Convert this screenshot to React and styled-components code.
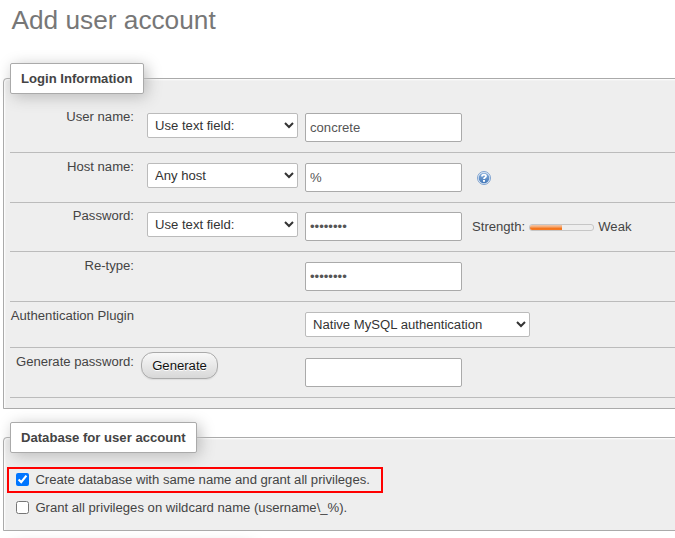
import React from 'react';
import styled, { createGlobalStyle } from 'styled-components';

const GlobalStyle = createGlobalStyle`
  html, body { margin: 0; padding: 0; background: #fff; }
  *, *::before, *::after { box-sizing: border-box; }
  body, input, select, button { font-family: "Liberation Sans", Arial, sans-serif; font-size: 13.12px; }
  body { color: #444; }
`;

const Page = styled.main`
  height: 538px;
  overflow: hidden;
`;

const Title = styled.h2`
  margin: 0;
  height: 63px;
  padding: 5px 0 0 11.5px;
  color: #777;
  font-size: 26.24px;
  font-weight: normal;
  line-height: 30px;
  white-space: nowrap;
`;

const Panel = styled.fieldset`
  margin: 0 -12px 13px 3px;
  padding: 0 10px 0 6px;
  border: 1px solid #aaa;
  border-radius: 4px 0 0 0;
  background: #eee;
  box-shadow: 1px 1px 2px #fff inset;
  min-width: 0;
`;

const Legend = styled.legend`
  width: ${(p) => p.$width}px;
  height: 31px;
  padding: 0 0 0 10px;
  border: 1px solid #aaa;
  border-radius: 2px;
  background: #fff;
  box-shadow: 3px 3px 15px #bbb;
  color: #444;
  font-weight: bold;
  line-height: 29px;
  white-space: nowrap;
`;

const Rows = styled.div`
  padding: 9px 0 10px;
`;

const Row = styled.div`
  display: flex;
  align-items: flex-start;
  height: ${(p) => p.$height || 50}px;
  padding-top: ${(p) => p.$top || 10}px;
  border-bottom: 1px solid #bbb;
`;

const Label = styled.label`
  width: 124px;
  margin-top: -4px;
  line-height: 15px;
  text-align: right;
  white-space: nowrap;
`;

const Choice = styled.div`
  display: flex;
  width: 171px;
  padding-left: 13px;
`;

const Select = styled.select`
  width: ${(p) => p.$width || 151}px;
  height: 25px;
  margin: 0;
  padding: 0 3px;
  border: 1px solid #bbb;
  border-radius: 2px;
  background: #fff;
  color: #333;
`;

const Input = styled.input`
  width: 157px;
  height: 29px;
  margin: 0;
  padding: 0 4px;
  border: 1px solid #aaa;
  border-radius: 2px;
  background: #fff;
  color: #555;
`;

const GenerateButton = styled.button`
  width: 77px;
  height: 27px;
  margin: -6px 0 0 -6px;
  padding: 0;
  border: 1px solid #aaa;
  border-radius: 12px;
  background: linear-gradient(#f8f8f8, #d8d8d8);
  box-shadow: 0 1px 1px #ddd;
  color: #111;
  text-shadow: 0 1px 0 #fff;
`;

const HelpIcon = styled.svg`
  width: 16px;
  height: 16px;
  margin: 7px 0 0 14px;
`;

const Strength = styled.div`
  display: flex;
  align-items: center;
  height: 29px;
  margin-left: 10px;
  gap: 4px;
`;

const Meter = styled.div`
  width: 65px;
  height: 7px;
  margin-top: 1px;
  overflow: hidden;
  border: 1px solid #c6c6c6;
  border-radius: 3px;
  background: #eee;
`;

const MeterFill = styled.div`
  width: 32px;
  height: 5px;
  background: linear-gradient(#f3c6a8 0%, #f4a66e 40%, #f5751c 65%, #f57a24 100%);
`;

const Options = styled.div`
  display: flex;
  flex-direction: column;
  align-items: flex-start;
  height: 77px;
  padding-top: 14px;
  margin-left: -3px;
`;

const Option = styled.label`
  display: flex;
  align-items: center;
  height: 26px;
  margin-bottom: 2px;
  padding: 0 11.5px 1px 7px;
  border: 2px solid ${(p) => (p.$marked ? '#f00' : 'transparent')};
  line-height: 15px;
  white-space: nowrap;
`;

const Checkbox = styled.input`
  width: 13px;
  height: 13px;
  margin: 0 6.4px 0 0;
`;

function Help() {
  return (
    <HelpIcon viewBox="0 0 16 16" role="img" aria-label="Documentation">
      <defs>
        <linearGradient id="help-fill" x1="0" y1="0" x2="0" y2="1">
          <stop offset="0" stopColor="#86addb" />
          <stop offset="1" stopColor="#4478b8" />
        </linearGradient>
      </defs>
      <circle cx="8" cy="8" r="6.5" fill="#e3ebf5" stroke="#7fa3d0" />
      <circle cx="8" cy="8" r="5.3" fill="url(#help-fill)" />
      <path d="M6 6.4C6 4.1 10 4 10 6.3C10 7.6 8 7.6 8 9.1" fill="none" stroke="#fff" strokeWidth="1.8" />
      <rect x="7" y="10" width="2" height="1.8" fill="#fff" />
    </HelpIcon>
  );
}

export default function App() {
  return (
    <>
      <GlobalStyle />
      <Page>
        <Title>Add user account</Title>
        <Panel>
          <Legend $width={134}>Login Information</Legend>
          <Rows>
            <Row>
              <Label>User name:</Label>
              <Choice><Select><option>Use text field:</option></Select></Choice>
              <Input type="text" defaultValue="concrete" spellCheck={false} />
            </Row>
            <Row>
              <Label>Host name:</Label>
              <Choice><Select><option>Any host</option></Select></Choice>
              <Input type="text" defaultValue="%" />
              <Help />
            </Row>
            <Row $height={49} $top={9}>
              <Label>Password:</Label>
              <Choice><Select><option>Use text field:</option></Select></Choice>
              <Input type="password" defaultValue="password" />
              <Strength>
                <span>Strength:</span>
                <Meter><MeterFill /></Meter>
                <span>Weak</span>
              </Strength>
            </Row>
            <Row>
              <Label>Re-type:</Label>
              <Choice />
              <Input type="password" defaultValue="password" />
            </Row>
            <Row $height={46}>
              <Label>Authentication Plugin</Label>
              <Choice />
              <Select $width={225}><option>Native MySQL authentication</option></Select>
            </Row>
            <Row>
              <Label>Generate password:</Label>
              <Choice><GenerateButton type="button">Generate</GenerateButton></Choice>
              <Input type="text" />
            </Row>
          </Rows>
        </Panel>
        <Panel>
          <Legend $width={187}>Database for user account</Legend>
          <Options>
            <Option $marked>
              <Checkbox type="checkbox" defaultChecked />
              Create database with same name and grant all privileges.
            </Option>
            <Option>
              <Checkbox type="checkbox" />
              Grant all privileges on wildcard name (username\_%).
            </Option>
          </Options>
        </Panel>
        <Panel>
          <Legend $width={240} />
        </Panel>
      </Page>
    </>
  );
}
